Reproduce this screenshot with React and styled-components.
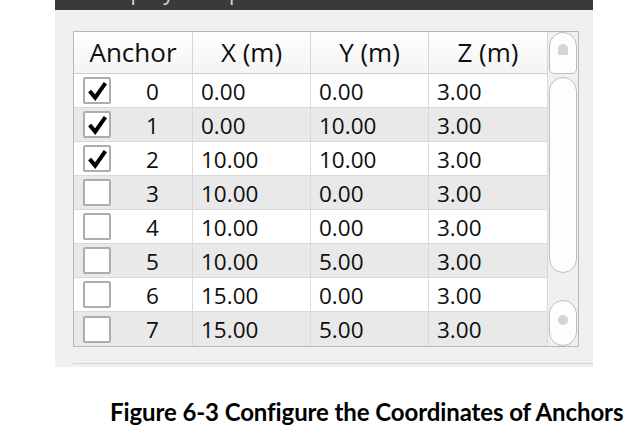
import React from "react";
import styled, { createGlobalStyle } from "styled-components";

const anchors = [
  { id: 0, x: "0.00", y: "0.00", z: "3.00", on: true },
  { id: 1, x: "0.00", y: "10.00", z: "3.00", on: true },
  { id: 2, x: "10.00", y: "10.00", z: "3.00", on: true },
  { id: 3, x: "10.00", y: "0.00", z: "3.00", on: false },
  { id: 4, x: "10.00", y: "0.00", z: "3.00", on: false },
  { id: 5, x: "10.00", y: "5.00", z: "3.00", on: false },
  { id: 6, x: "15.00", y: "0.00", z: "3.00", on: false },
  { id: 7, x: "15.00", y: "5.00", z: "3.00", on: false },
];

const GlobalStyle = createGlobalStyle`
  html, body { margin: 0; padding: 0; background: #fff; }
  body { font-family: "Open Sans", "Noto Sans", sans-serif; }
`;

const Page = styled.div`
  width: 630px;
  height: 438px;
  overflow: hidden;
  display: flex;
  flex-direction: column;
`;

const Panel = styled.section`
  margin-left: 55px;
  width: 538px;
  height: 367px;
  background: #f0f0f0;
  display: flex;
  flex-direction: column;
`;

/* window title strip, only the bottom of its caption shows */
const TitleBar = styled.div`
  height: 10px;
  background: #3a3a3a;
  overflow: hidden;
`;

const TitleText = styled.div`
  margin: -20px 0 0 42px;
  font-size: 21px;
  line-height: 24px;
  color: #d8d8d8;
  letter-spacing: 1px;
`;

const Body = styled.div`
  padding: 21px 14px 0 18px;
`;

const Table = styled.div`
  display: flex;
  width: 506px;
  height: 316px;
  box-sizing: border-box;
  border: 1px solid #b8b8b8;
  background: #fff;
`;

const Grid = styled.div`
  display: grid;
  grid-template-columns: 119px 118px 118px 119px;
  grid-template-rows: 42px repeat(8, 34px);
  color: #0e0e0e;
`;

const HeadCell = styled.div`
  display: flex;
  align-items: center;
  justify-content: center;
  box-sizing: border-box;
  border-right: 1px solid #d6d6d6;
  border-bottom: 1px solid #cfcfcf;
  background: linear-gradient(#ffffff, #f4f4f4);
  font-size: 26px;
  padding-bottom: 2px;
`;

const Cell = styled.div`
  display: flex;
  align-items: center;
  box-sizing: border-box;
  padding-left: 8px;
  border-right: 1px solid #d9d9d9;
  border-bottom: ${(p) => (p.$last ? "none" : "1px solid #d9d9d9")};
  background: ${(p) => (p.$shade ? "#e9e9e9" : "#fff")};
  font-size: 22.5px;
  padding-top: 1px;
`;

const AnchorCell = styled(Cell)`
  padding-left: 9px;
`;

const Box = styled.span`
  width: 28px;
  height: 27px;
  box-sizing: border-box;
  border: 2px solid #adadad;
  border-radius: 2px;
  background: #fff;
  display: flex;
  align-items: center;
  justify-content: center;
  margin-top: -1px;
`;

const Num = styled.span`
  flex: 1;
  text-align: center;
  padding-left: 2px;
`;

const ScrollBar = styled.div`
  flex: 1;
  display: flex;
  flex-direction: column;
  padding: 0 1px;
  background: #f0f0f0;
`;

const Btn = styled.div`
  box-sizing: border-box;
  height: ${(p) => p.$h}px;
  border: 1.5px solid #bdbdbd;
  border-radius: ${(p) => p.$radius};
  background: #fdfdfd;
  display: flex;
  align-items: center;
  justify-content: center;
`;

const Handle = styled.div`
  box-sizing: border-box;
  margin-top: 3px;
  height: 196px;
  border: 1.5px solid #bdbdbd;
  border-radius: 14px;
  background: #fdfdfd;
`;

const Gap = styled.div`
  flex: 1;
`;

const Nub = styled.span`
  width: 10px;
  height: ${(p) => (p.$up ? 11 : 10)}px;
  background: #d4d4d4;
  border-radius: ${(p) => (p.$up ? "5px 5px 1px 1px" : "5px")};
  margin-top: ${(p) => (p.$up ? -8 : -6)}px;
`;

const Divider = styled.div`
  margin: 16px 0 0 18px;
  border-top: 1px solid #d2d2d2;
  flex: 1;
`;

const Caption = styled.div`
  padding: 30px 0 0 110px;
  font-family: Lato, "Open Sans", sans-serif;
  font-weight: 700;
  font-size: 24px;
  letter-spacing: -0.1px;
  line-height: 30px;
  color: #000;
  white-space: nowrap;
`;

const Check = () => (
  <svg width="21" height="21" viewBox="0 0 20 20">
    <path
      d="M2.5 10.5 L7.8 16.8 L17.5 3"
      fill="none"
      stroke="#000"
      strokeWidth="3.8"
      strokeLinejoin="miter"
    />
  </svg>
);

export default function App() {
  return (
    <Page>
      <GlobalStyle />
      <Panel>
        <TitleBar>
          <TitleText>Display Setup</TitleText>
        </TitleBar>
        <Body>
          <Table>
            <Grid>
              <HeadCell>Anchor</HeadCell>
              <HeadCell>X (m)</HeadCell>
              <HeadCell>Y (m)</HeadCell>
              <HeadCell>Z (m)</HeadCell>
              {anchors.map((a, i) => {
                const shade = i % 2 === 1;
                const last = i === anchors.length - 1;
                return (
                  <React.Fragment key={a.id}>
                    <AnchorCell $shade={shade} $last={last}>
                      <Box>{a.on && <Check />}</Box>
                      <Num>{a.id}</Num>
                    </AnchorCell>
                    <Cell $shade={shade} $last={last}>{a.x}</Cell>
                    <Cell $shade={shade} $last={last}>{a.y}</Cell>
                    <Cell $shade={shade} $last={last}>{a.z}</Cell>
                  </React.Fragment>
                );
              })}
            </Grid>
            <ScrollBar>
              <Btn $h={42} $radius="14px 14px 5px 5px">
                <Nub $up />
              </Btn>
              <Handle />
              <Gap />
              <Btn $h={46} $radius="14px">
                <Nub />
              </Btn>
            </ScrollBar>
          </Table>
        </Body>
        <Divider />
      </Panel>
      <Caption>Figure 6-3 Configure the Coordinates of Anchors</Caption>
    </Page>
  );
}
